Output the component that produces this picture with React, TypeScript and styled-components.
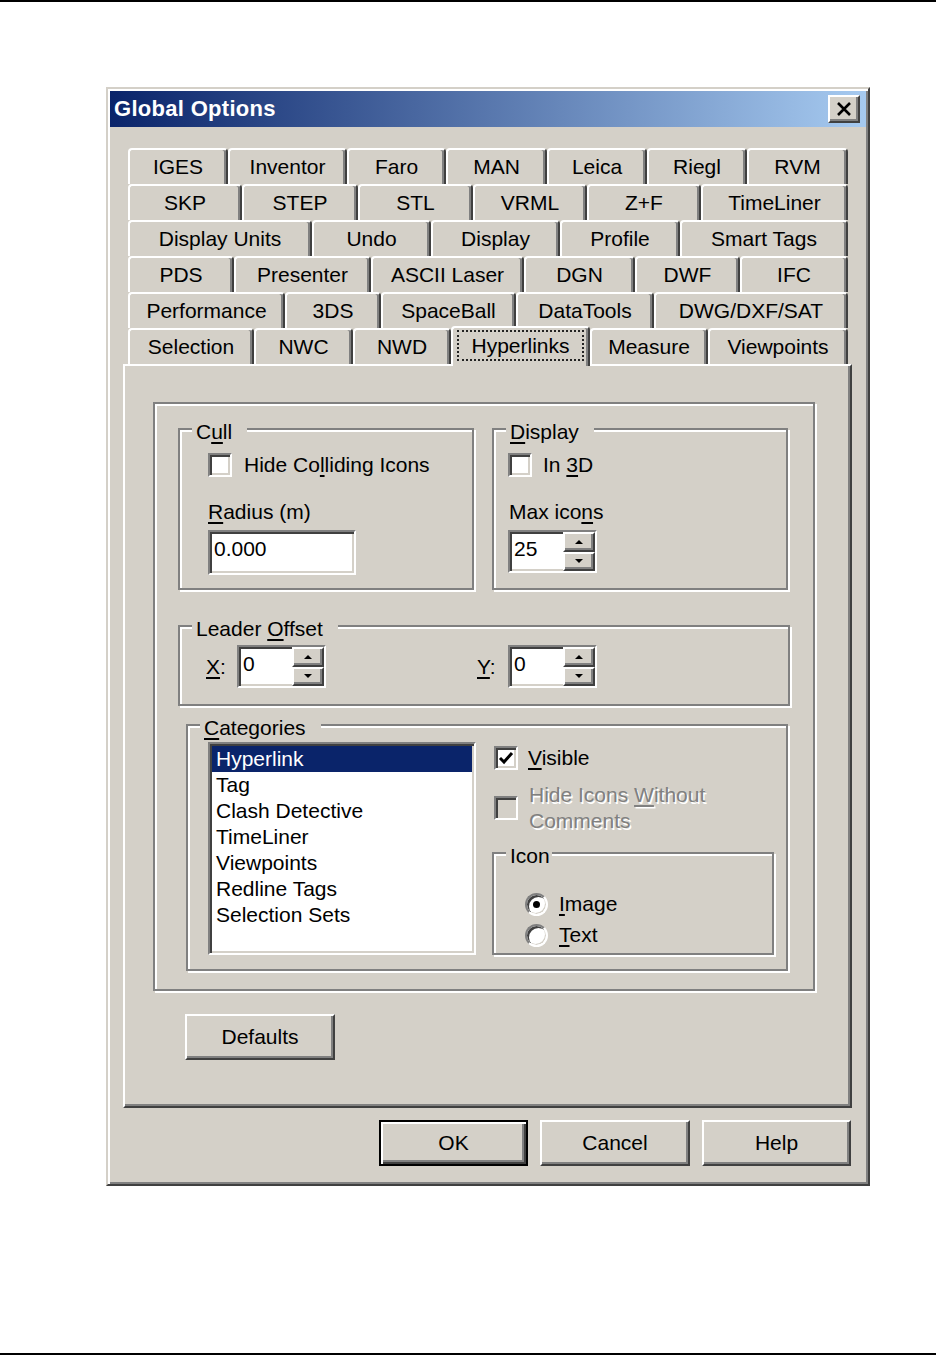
import React from "react";
import styled, { createGlobalStyle, css } from "styled-components";

const FACE = "#d4d0c8";
const LIGHT = "#ffffff";
const SHADOW = "#808080";
const DARK = "#404040";
const NAVY = "#0a246a";

const GlobalStyle = createGlobalStyle`
  html, body {
    margin: 0;
    padding: 0;
    background: #fff;
  }
  body {
    font-family: "Liberation Sans", Arial, sans-serif;
    font-size: 21px;
    color: #000;
  }
  * {
    box-sizing: border-box;
  }
`;

// bevels (everything is a 2x scaled classic windows dialog)
const raised = css`
  border: 2px solid;
  border-color: ${LIGHT} ${DARK} ${DARK} ${LIGHT};
  box-shadow: inset -2px -2px 0 ${SHADOW};
`;

const sunken = css`
  border: 2px solid;
  border-color: ${SHADOW} ${LIGHT} ${LIGHT} ${SHADOW};
  box-shadow: inset 2px 2px 0 ${DARK}, inset -2px -2px 0 ${FACE};
`;

const etched = css`
  border: 2px solid ${SHADOW};
  box-shadow: inset 2px 2px 0 ${LIGHT}, 2px 2px 0 ${LIGHT};
`;

const Page = styled.div`
  width: 936px;
  height: 1355px;
  display: flex;
  flex-direction: column;
  background: #fff;
`;

const Rule = styled.div`
  flex: none;
  height: 2px;
  background: #000;
`;

const Stage = styled.div`
  flex: 1;
  padding: 85px 0 0 106px;
`;

const Dialog = styled.div`
  width: 764px;
  height: 1099px;
  padding: 2px;
  display: flex;
  flex-direction: column;
  background: ${FACE};
  border: 2px solid;
  border-color: ${FACE} ${DARK} ${DARK} ${FACE};
  box-shadow: inset 2px 2px 0 ${LIGHT}, inset -2px -2px 0 ${SHADOW};
`;

const TitleBar = styled.div`
  height: 36px;
  flex: none;
  display: flex;
  align-items: center;
  justify-content: space-between;
  padding: 0 6px 0 4px;
  background: linear-gradient(to right, ${NAVY}, #a6caf0);
`;

const TitleText = styled.div`
  color: #fff;
  font-weight: bold;
  font-size: 22px;
  letter-spacing: 0.3px;
`;

const CloseButton = styled.div`
  width: 32px;
  height: 28px;
  display: flex;
  align-items: center;
  justify-content: center;
  background: ${FACE};
  ${raised};
`;

const Body = styled.div`
  flex: 1;
  display: flex;
  flex-direction: column;
  padding: 21px 14px 0 13px;
`;

const TabStrip = styled.div`
  display: flex;
  flex-direction: column;
  padding: 0 4px 0 5px;
`;

const TabRow = styled.div`
  display: flex;
  height: 36px;
`;

const Tab = styled.div<{ $w: number; $active?: boolean }>`
  flex: none;
  width: ${(p) => p.$w}px;
  height: ${(p) => (p.$active ? 40 : 36)}px;
  margin: ${(p) => (p.$active ? "-2px 0 -2px 0" : "0")};
  display: flex;
  align-items: center;
  justify-content: center;
  padding-bottom: ${(p) => (p.$active ? 4 : 0)}px;
  background: ${FACE};
  border-top: 2px solid ${LIGHT};
  border-left: 2px solid ${LIGHT};
  border-right: 2px solid ${DARK};
  border-radius: 4px 4px 0 0;
  box-shadow: inset -2px 0 0 ${SHADOW};
  white-space: nowrap;
  position: ${(p) => (p.$active ? "relative" : "static")};
  z-index: ${(p) => (p.$active ? 1 : "auto")};
`;

const FocusText = styled.span`
  padding: 0 12px;
  line-height: 27px;
  border: 2px dotted #222;
`;

const Panel = styled.div`
  width: 729px;
  height: 744px;
  display: flex;
  flex-direction: column;
  align-items: flex-start;
  padding: 36px 0 0 28px;
  border: 2px solid;
  border-color: ${LIGHT} ${DARK} ${DARK} ${LIGHT};
  box-shadow: inset -2px -2px 0 ${SHADOW};
`;

const Frame = styled.div`
  width: 662px;
  height: 589px;
  display: flex;
  flex-direction: column;
  align-items: flex-start;
  padding: 24px 0 0 23px;
  ${etched};
`;

const GroupRow = styled.div`
  display: flex;
  gap: 18px;
`;

const GroupBox = styled.div<{ $w: number; $h: number; $pl: number; $mt?: number; $ml?: number }>`
  flex: none;
  width: ${(p) => p.$w}px;
  height: ${(p) => p.$h}px;
  margin: ${(p) => p.$mt ?? 0}px 0 0 ${(p) => p.$ml ?? 0}px;
  padding: 0 0 0 ${(p) => p.$pl}px;
  display: flex;
  flex-direction: column;
  align-items: flex-start;
  ${etched};
`;

const GroupLabel = styled.div<{ $pl: number; $pr?: number }>`
  margin: -10px 0 0 ${(p) => 12 - p.$pl}px;
  padding: 0 ${(p) => p.$pr ?? 15}px 0 4px;
  height: 24px;
  line-height: 24px;
  background: ${FACE};
  white-space: nowrap;
`;

const CheckRow = styled.div<{ $mt: number; $gap: number }>`
  display: flex;
  align-items: center;
  gap: ${(p) => p.$gap}px;
  margin-top: ${(p) => p.$mt}px;
  min-height: 24px;
  white-space: nowrap;
`;

const CheckBox = styled.div<{ $disabled?: boolean }>`
  flex: none;
  width: 24px;
  height: 24px;
  display: flex;
  align-items: center;
  justify-content: center;
  background: ${(p) => (p.$disabled ? FACE : "#fff")};
  ${sunken};
`;

const DisabledText = styled.div`
  color: ${SHADOW};
  line-height: 26px;
  text-shadow: 1.5px 1.5px 0 ${LIGHT};
`;

const FieldLabel = styled.div<{ $mt: number; $ml?: number }>`
  margin: ${(p) => p.$mt}px 0 0 ${(p) => p.$ml ?? 0}px;
  line-height: 24px;
`;

const TextBox = styled.div`
  width: 148px;
  height: 45px;
  margin-top: 6px;
  padding: 5px 0 0 4px;
  line-height: 24px;
  background: #fff;
  ${sunken};
`;

const SpinBox = styled.div<{ $mt?: number }>`
  flex: none;
  width: 89px;
  height: 43px;
  margin-top: ${(p) => p.$mt ?? 0}px;
  display: flex;
  background: #fff;
  ${sunken};
`;

const SpinValue = styled.div`
  flex: 1;
  padding: 5px 0 0 4px;
  line-height: 24px;
`;

const SpinButtons = styled.div`
  flex: none;
  width: 32px;
  display: flex;
  flex-direction: column;
`;

const SpinButton = styled.div`
  flex: 1;
  display: flex;
  align-items: center;
  justify-content: center;
  background: ${FACE};
  ${raised};
`;

const LeaderRow = styled.div`
  display: grid;
  grid-template-columns: 271px auto;
  margin-top: 4px;
`;

const SpinField = styled.div`
  display: flex;
  align-items: center;
`;

const AxisLabel = styled.div`
  width: 31px;
  line-height: 24px;
`;

const CategoryRow = styled.div`
  display: flex;
  gap: 16px;
  margin-top: 2px;
`;

const ListBox = styled.div`
  flex: none;
  width: 268px;
  height: 213px;
  padding: 2px 2px 0 2px;
  background: #fff;
  ${sunken};
`;

const ListItem = styled.div<{ $selected?: boolean }>`
  height: 26px;
  line-height: 26px;
  padding-left: 4px;
  white-space: nowrap;
  background: ${(p) => (p.$selected ? NAVY : "transparent")};
  color: ${(p) => (p.$selected ? "#fff" : "#000")};
`;

const SideColumn = styled.div`
  display: flex;
  flex-direction: column;
  align-items: flex-start;
  padding-left: 2px;
`;

const RadioRow = styled.div<{ $mt: number }>`
  display: flex;
  align-items: center;
  gap: 11px;
  height: 26px;
  margin-top: ${(p) => p.$mt}px;
`;

const Radio = styled.div`
  flex: none;
  width: 23px;
  height: 23px;
  border-radius: 50%;
  display: flex;
  align-items: center;
  justify-content: center;
  background: #fff;
  border: 2px solid;
  border-color: ${SHADOW} ${LIGHT} ${LIGHT} ${SHADOW};
  box-shadow: inset 2px 2px 0 ${DARK}, inset -1px -1px 0 ${FACE};
`;

const RadioDot = styled.div`
  width: 7px;
  height: 7px;
  border-radius: 50%;
  background: #000;
`;

const Key = styled.span`
  text-decoration: underline;
  text-underline-offset: 3px;
`;

const PushButton = styled.button<{ $w: number; $default?: boolean; $mt?: number; $ml?: number }>`
  flex: none;
  width: ${(p) => p.$w}px;
  height: 46px;
  margin: ${(p) => p.$mt ?? 0}px 0 0 ${(p) => p.$ml ?? 0}px;
  padding: 0;
  font: inherit;
  color: #000;
  background: ${FACE};
  ${(p) =>
    p.$default
      ? css`
          border: 2px solid #000;
          box-shadow: inset 2px 2px 0 ${LIGHT}, inset -2px -2px 0 ${DARK}, inset -4px -4px 0 ${SHADOW};
        `
      : raised};
`;

const ButtonBar = styled.div`
  display: flex;
  justify-content: flex-end;
  gap: 12px;
  margin-top: 12px;
  padding-right: 1px;
`;

const tabRows: { label: string; w: number }[][] = [
  [
    { label: "IGES", w: 100 },
    { label: "Inventor", w: 119 },
    { label: "Faro", w: 99 },
    { label: "MAN", w: 101 },
    { label: "Leica", w: 100 },
    { label: "Riegl", w: 100 },
    { label: "RVM", w: 101 },
  ],
  [
    { label: "SKP", w: 114 },
    { label: "STEP", w: 116 },
    { label: "STL", w: 115 },
    { label: "VRML", w: 114 },
    { label: "Z+F", w: 114 },
    { label: "TimeLiner", w: 147 },
  ],
  [
    { label: "Display Units", w: 184 },
    { label: "Undo", w: 119 },
    { label: "Display", w: 129 },
    { label: "Profile", w: 120 },
    { label: "Smart Tags", w: 168 },
  ],
  [
    { label: "PDS", w: 106 },
    { label: "Presenter", w: 137 },
    { label: "ASCII Laser", w: 153 },
    { label: "DGN", w: 111 },
    { label: "DWF", w: 105 },
    { label: "IFC", w: 108 },
  ],
  [
    { label: "Performance", w: 157 },
    { label: "3DS", w: 96 },
    { label: "SpaceBall", w: 135 },
    { label: "DataTools", w: 138 },
    { label: "DWG/DXF/SAT", w: 194 },
  ],
  [
    { label: "Selection", w: 126 },
    { label: "NWC", w: 99 },
    { label: "NWD", w: 98 },
    { label: "Hyperlinks", w: 139 },
    { label: "Measure", w: 118 },
    { label: "Viewpoints", w: 140 },
  ],
];

const categories = [
  "Hyperlink",
  "Tag",
  "Clash Detective",
  "TimeLiner",
  "Viewpoints",
  "Redline Tags",
  "Selection Sets",
];

function Arrow({ up }: { up?: boolean }) {
  return (
    <svg width="8" height="4" viewBox="0 0 8 4">
      <polygon points={up ? "0,4 8,4 4,0" : "0,0 8,0 4,4"} fill="#000" />
    </svg>
  );
}

function Spinner({ value, mt }: { value: string; mt?: number }) {
  return (
    <SpinBox $mt={mt}>
      <SpinValue>{value}</SpinValue>
      <SpinButtons>
        <SpinButton>
          <Arrow up />
        </SpinButton>
        <SpinButton>
          <Arrow />
        </SpinButton>
      </SpinButtons>
    </SpinBox>
  );
}

function CheckMark() {
  return (
    <svg width="16" height="16" viewBox="0 0 16 16">
      <polyline points="2,8 6,12 14,3" fill="none" stroke="#000" strokeWidth="3" />
    </svg>
  );
}

export default function App(): React.JSX.Element {
  return (
    <>
      <GlobalStyle />
      <Page>
        <Rule />
        <Stage>
          <Dialog>
            <TitleBar>
              <TitleText>Global Options</TitleText>
              <CloseButton>
                <svg width="14" height="14" viewBox="0 0 14 14">
                  <path d="M1 1 L13 13 M13 1 L1 13" stroke="#000" strokeWidth="2.6" />
                </svg>
              </CloseButton>
            </TitleBar>
            <Body>
              <TabStrip>
                {tabRows.map((row, i) => (
                  <TabRow key={i}>
                    {row.map((tab) => {
                      const active = tab.label === "Hyperlinks";
                      return (
                        <Tab key={tab.label} $w={tab.w} $active={active}>
                          {active ? <FocusText>{tab.label}</FocusText> : tab.label}
                        </Tab>
                      );
                    })}
                  </TabRow>
                ))}
              </TabStrip>
              <Panel>
                <Frame>
                  <GroupRow>
                    <GroupBox $w={296} $h={162} $pl={28}>
                      <GroupLabel $pl={28}>
                        C<Key>u</Key>ll
                      </GroupLabel>
                      <CheckRow $mt={9} $gap={12}>
                        <CheckBox />
                        <span>
                          Hide Co<Key>l</Key>liding Icons
                        </span>
                      </CheckRow>
                      <FieldLabel $mt={23}>
                        <Key>R</Key>adius (m)
                      </FieldLabel>
                      <TextBox>0.000</TextBox>
                    </GroupBox>
                    <GroupBox $w={296} $h={162} $pl={14}>
                      <GroupLabel $pl={14}>
                        <Key>D</Key>isplay
                      </GroupLabel>
                      <CheckRow $mt={9} $gap={11}>
                        <CheckBox />
                        <span>
                          In <Key>3</Key>D
                        </span>
                      </CheckRow>
                      <FieldLabel $mt={23} $ml={1}>
                        Max ico<Key>n</Key>s
                      </FieldLabel>
                      <Spinner value="25" mt={6} />
                    </GroupBox>
                  </GroupRow>
                  <GroupBox $w={612} $h={81} $pl={26} $mt={35}>
                    <GroupLabel $pl={26}>
                      Leader <Key>O</Key>ffset
                    </GroupLabel>
                    <LeaderRow>
                      <SpinField>
                        <AxisLabel>
                          <Key>X</Key>:
                        </AxisLabel>
                        <Spinner value="0" />
                      </SpinField>
                      <SpinField>
                        <AxisLabel>
                          <Key>Y</Key>:
                        </AxisLabel>
                        <Spinner value="0" />
                      </SpinField>
                    </LeaderRow>
                  </GroupBox>
                  <GroupBox $w={602} $h={247} $pl={20} $mt={18} $ml={8}>
                    <GroupLabel $pl={20}>
                      <Key>C</Key>ategories
                    </GroupLabel>
                    <CategoryRow>
                      <ListBox>
                        {categories.map((c, i) => (
                          <ListItem key={c} $selected={i === 0}>
                            {c}
                          </ListItem>
                        ))}
                      </ListBox>
                      <SideColumn>
                        <CheckRow $mt={4} $gap={10}>
                          <CheckBox>
                            <CheckMark />
                          </CheckBox>
                          <span>
                            <Key>V</Key>isible
                          </span>
                        </CheckRow>
                        <CheckRow $mt={12} $gap={11}>
                          <CheckBox $disabled />
                          <DisabledText>
                            Hide Icons <Key>W</Key>ithout
                            <br />
                            Comments
                          </DisabledText>
                        </CheckRow>
                        <GroupBox $w={282} $h={103} $pl={31} $mt={18} $ml={-2}>
                          <GroupLabel $pl={31} $pr={2}>
                            Icon
                          </GroupLabel>
                          <RadioRow $mt={23}>
                            <Radio>
                              <RadioDot />
                            </Radio>
                            <span>
                              <Key>I</Key>mage
                            </span>
                          </RadioRow>
                          <RadioRow $mt={5}>
                            <Radio />
                            <span>
                              <Key>T</Key>ext
                            </span>
                          </RadioRow>
                        </GroupBox>
                      </SideColumn>
                    </CategoryRow>
                  </GroupBox>
                </Frame>
                <PushButton $w={150} $mt={23} $ml={32}>
                  Defaults
                </PushButton>
              </Panel>
              <ButtonBar>
                <PushButton $w={149} $default>
                  OK
                </PushButton>
                <PushButton $w={150}>Cancel</PushButton>
                <PushButton $w={149}>Help</PushButton>
              </ButtonBar>
            </Body>
          </Dialog>
        </Stage>
        <Rule />
      </Page>
    </>
  );
}
